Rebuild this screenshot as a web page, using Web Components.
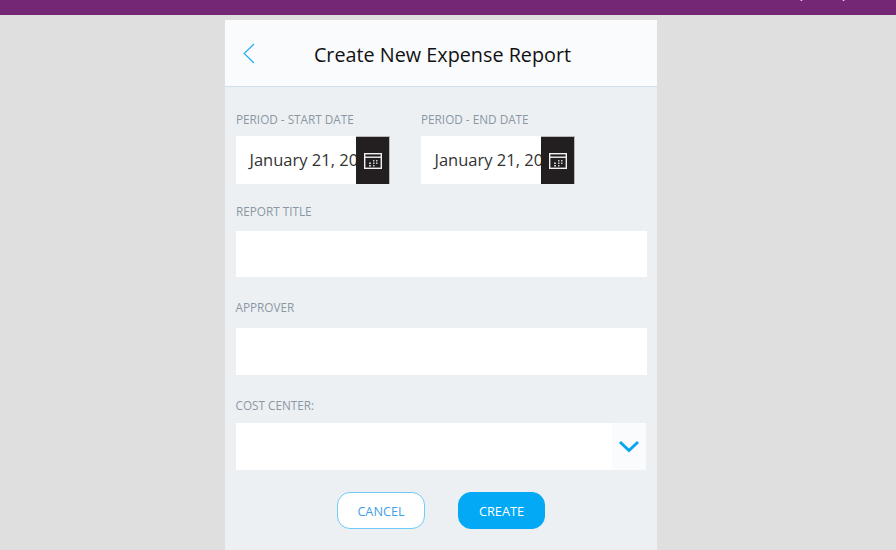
<!DOCTYPE html>
<html lang="en">
<head>
<meta charset="utf-8">
<title>Create New Expense Report</title>
<style>
  html, body { margin: 0; height: 100%; }
  body { background: #dfdfdf; font-family: "Open Sans", "Liberation Sans", sans-serif; overflow: hidden; }
</style>
</head>
<body>
<top-bar></top-bar>
<report-panel heading="Create New Expense Report">
  <div style="display:flex;gap:31px;margin-left:11px">
    <form-field label="Period - Start Date"><date-input value="January 21, 2020"></date-input></form-field>
    <form-field label="Period - End Date"><date-input value="January 21, 2020"></date-input></form-field>
  </div>
  <form-field label="Report Title" style="margin:19px 10px 0 11px" gap="12"><text-input style="height:46px"></text-input></form-field>
  <form-field label="Approver" style="margin:22px 10px 0 10.5px" gap="13"><text-input></text-input></form-field>
  <form-field label="Cost Center:" style="margin:22px 11px 0 10.5px" gap="10"><select-input></select-input></form-field>
  <div style="display:flex;gap:33px;margin:22px 0 0 112px">
    <action-button>Cancel</action-button>
    <action-button primary>Create</action-button>
  </div>
</report-panel>

<script>
// Purple strip at the top, the user name is cut off by the edge of the window
class TopBar extends HTMLElement {
  constructor() {
    super();
    this.attachShadow({ mode: 'open' }).innerHTML = `
      <style>
        :host { display: flex; justify-content: flex-end; align-items: flex-end; height: 15px; background: #742774; overflow: hidden; }
        span { color: #fff; font-size: 13px; line-height: 19px; margin: 0 50px 11px 0; white-space: nowrap; }
      </style>
      <span>(Admin)</span>
    `;
  }
}
customElements.define('top-bar', TopBar);

class ReportPanel extends HTMLElement {
  constructor() {
    super();
    const heading = this.getAttribute('heading') || '';
    this.attachShadow({ mode: 'open' }).innerHTML = `
      <style>
        :host { display: block; width: 432px; height: 530px; margin: 5px 0 0 225px; background: #edf0f3; }
        header { position: relative; display: flex; align-items: center; justify-content: center; height: 66px; background: #fafbfd; border-bottom: 1px solid #cde2ee; }
        h1 { margin: 3px 0 0 3px; font-size: 19.8px; font-weight: 400; color: #111; }
        svg { position: absolute; left: 18px; top: 23px; }
        main { padding-top: 24px; }
      </style>
      <header>
        <svg width="12" height="21" viewBox="0 0 12 21" fill="none" stroke="#20aef5" stroke-width="1.2"><path d="M11 1 1.200 10.500 11 20"/></svg>
        <h1>${heading}</h1>
      </header>
      <main><slot></slot></main>
    `;
  }
}
customElements.define('report-panel', ReportPanel);

class FormField extends HTMLElement {
  constructor() {
    super();
    const label = this.getAttribute('label') || '';
    const gap = this.getAttribute('gap') || '9';
    this.attachShadow({ mode: 'open' }).innerHTML = `
      <style>
        :host { display: block; }
        label { display: block; height: 16px; margin-bottom: ${gap}px; font-size: 11.75px; line-height: 16px; color: #8b97a3; text-transform: uppercase; white-space: nowrap; }
      </style>
      <label>${label}</label>
      <slot></slot>
    `;
  }
}
customElements.define('form-field', FormField);

class DateInput extends HTMLElement {
  constructor() {
    super();
    const value = this.getAttribute('value') || '';
    this.attachShadow({ mode: 'open' }).innerHTML = `
      <style>
        :host { display: flex; width: 154px; height: 48px; background: #fff; }
        .value { flex: 1; min-width: 0; overflow: hidden; padding-left: 13.5px; font-size: 16.5px; line-height: 48px; color: #333; white-space: nowrap; }
        button { display: flex; align-items: center; justify-content: center; width: 34px; padding: 0; background: #231f20; border: 0; border-top: 1px solid #b9b9b9; border-right: 1px solid #b9b9b9; box-sizing: border-box; }
      </style>
      <div class="value">${value}</div>
      <button aria-label="Pick a date">
        <svg width="18" height="16" viewBox="0 0 18 16" fill="none">
          <rect x=".7" y=".7" width="16.600" height="14.600" stroke="#f2f2f2" stroke-width="1.400"/>
          <path d="M1 4.200h16" stroke="#f2f2f2" stroke-width="1.400"/>
          <path d="M9 7h1.500v1.500H9zM12 7h1.500v1.500H12zM5 9.500h2V11H5zM9 9.500h1.500V11H9zM12 9.500h1.500V11H12zM5 12h2v1.500H5zM9 12h1.500v1.500H9z" fill="#ccc"/>
        </svg>
      </button>
    `;
  }
}
customElements.define('date-input', DateInput);

class TextInput extends HTMLElement {
  constructor() {
    super();
    this.attachShadow({ mode: 'open' }).innerHTML = `
      <style>
        :host { display: block; height: 47px; background: #fff; }
      </style>
    `;
  }
}
customElements.define('text-input', TextInput);

class SelectInput extends HTMLElement {
  constructor() {
    super();
    this.attachShadow({ mode: 'open' }).innerHTML = `
      <style>
        :host { display: flex; justify-content: flex-end; height: 47px; background: #fff; }
        div { display: flex; align-items: center; justify-content: center; width: 34px; background: #fafbfc; }
      </style>
      <div>
        <svg width="22" height="13" viewBox="0 0 22 13" fill="none" stroke="#0ba4ee" stroke-width="3"><path d="M2 2 11 10.500 20 2"/></svg>
      </div>
    `;
  }
}
customElements.define('select-input', SelectInput);

class ActionButton extends HTMLElement {
  constructor() {
    super();
    this.attachShadow({ mode: 'open' }).innerHTML = `
      <style>
        :host { display: block; }
        button { display: block; width: 88px; height: 37px; padding: 0; box-sizing: border-box; border: 1px solid #6fcbf7; border-radius: 13px; background: #fff; color: #3f9fe6; font: 12.7px "Open Sans", "Liberation Sans", sans-serif; text-transform: uppercase; }
        :host([primary]) button { width: 87px; background: #03a9f4; border-color: #03a9f4; color: #fff; }
      </style>
      <button><slot></slot></button>
    `;
  }
}
customElements.define('action-button', ActionButton);
</script>
</body>
</html>
